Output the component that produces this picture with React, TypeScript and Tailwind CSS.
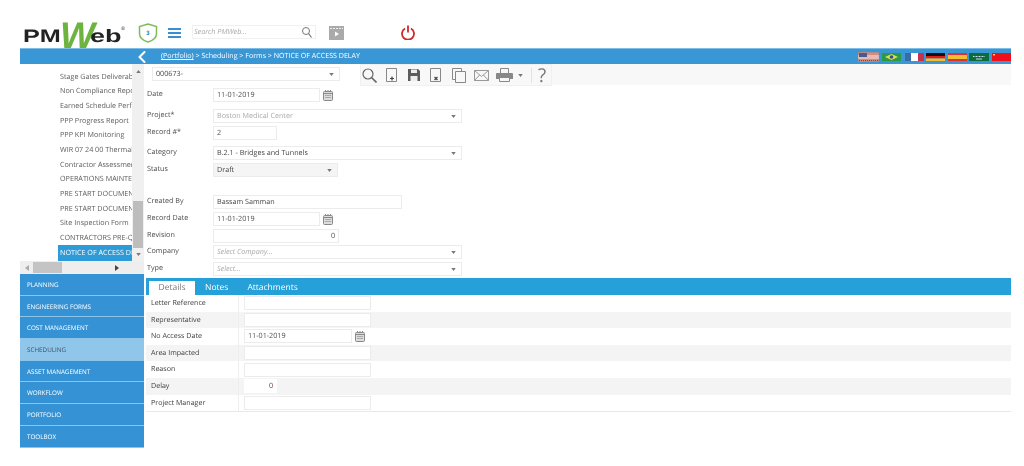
import { ReactNode } from 'react';
import { ChevronLeft } from 'lucide-react';

const treeItems = [
  'Stage Gates Deliverables',
  'Non Compliance Report',
  'Earned Schedule Performance',
  'PPP Progress Report',
  'PPP KPI Monitoring',
  'WIR 07 24 00 Thermal',
  'Contractor Assessment',
  'OPERATIONS MAINTENANCE',
  'PRE START DOCUMENTS',
  'PRE START DOCUMENTS',
  'Site Inspection Form',
  'CONTRACTORS PRE-QUAL',
];

const modules = [
  'PLANNING',
  'ENGINEERING FORMS',
  'COST MANAGEMENT',
  'SCHEDULING',
  'ASSET MANAGEMENT',
  'WORKFLOW',
  'PORTFOLIO',
  'TOOLBOX',
];

function Caret({ className = '' }: { className?: string }) {
  return (
    <svg width="5" height="3" viewBox="0 0 6 4" className={className}>
      <path d="M0 0h6L3 4z" fill="#777" />
    </svg>
  );
}

function CalIcon() {
  return (
    <svg width="10" height="11" viewBox="0 0 10 11" className="ml-[3px] shrink-0">
      <rect x="0.5" y="1.5" width="9" height="9" rx="1" fill="#ddd" stroke="#888" />
      <path d="M0.5 3.5h9" stroke="#888" />
      <path d="M2.5 0v2M5 0v2M7.5 0v2" stroke="#888" />
      <path d="M2 5.5h6M2 7.5h6" stroke="#aaa" />
    </svg>
  );
}

function Box({ w, children, align = 'left', bg = 'bg-white', caret, color = 'text-[#4a4a4a]', h = 'h-[14px]', border = 'border-[#ececec]' }: {
  w: string; children?: ReactNode; align?: 'left' | 'right'; bg?: string; caret?: boolean; color?: string; h?: string; border?: string;
}) {
  return (
    <div className={`${w} ${h} ${bg} ${color} ${border} shrink-0 border flex items-center px-[3px] text-[7.200px] leading-none ${align === 'right' ? 'justify-end' : 'justify-between'}`}>
      <span className="pt-[1px]">{children}</span>
      {caret && <Caret className="mr-[2px]" />}
    </div>
  );
}

function FormRow({ label, children, h }: { label: string; children: ReactNode; h: string }) {
  return (
    <div className={`flex items-start ${h}`}>
      <div className="w-[66px] shrink-0 text-[7.200px] leading-[13.500px] text-[#4a4a4a]">{label}</div>
      <div className="flex items-center">{children}</div>
    </div>
  );
}

function DetailRow({ label, shade, children }: { label: string; shade?: boolean; children: ReactNode }) {
  return (
    <div className={`flex h-[16.600px] items-center ${shade ? 'bg-[#f4f4f4]' : 'bg-white'}`}>
      <div className="w-[93px] h-full shrink-0 border-r border-[#eee] pl-[5px] text-[7.100px] leading-[17px] text-[#3c3c3c]">{label}</div>
      <div className="ml-[5px] flex items-center">{children}</div>
    </div>
  );
}

function ToolbarIcons() {
  return (
    <div className="flex items-center h-[22px] w-[192px] border border-[#f0f0f0] bg-[#f8f8f8]">
      {/* search */}
      <svg width="15" height="15" viewBox="0 0 15 15" className="ml-[1px]" fill="none" stroke="#666">
        <circle cx="6" cy="6" r="5" strokeWidth="1.2" />
        <path d="M9.5 9.5L14.5 14.5" strokeWidth="1.6" />
      </svg>
      {/* new */}
      <svg width="12" height="14" viewBox="0 0 12 14" className="ml-[9px]" fill="none">
        <path d="M0.5 0.5h10v13h-10z" stroke="#888" />
        <path d="M6 8.5v4M4 10.5h4" strokeWidth="1.2" stroke="#444" />
      </svg>
      {/* save */}
      <svg width="12" height="12" viewBox="0 0 12 12" className="ml-[10px]">
        <path d="M0 0h10l2 2v10H0z" fill="#5c5c5c" />
        <rect x="3" y="0.5" width="6" height="3.5" fill="#eee" />
        <rect x="2.5" y="7" width="7" height="5" fill="#eee" />
      </svg>
      {/* delete */}
      <svg width="12" height="14" viewBox="0 0 12 14" className="ml-[10px]" fill="none">
        <path d="M0.5 0.5h10v13h-10z" stroke="#888" />
        <path d="M4.5 9l3 3M7.5 9l-3 3" stroke="#444" strokeWidth="1.2" />
      </svg>
      {/* copy */}
      <svg width="14" height="15" viewBox="0 0 14 15" className="ml-[10px]" fill="#f8f8f8" stroke="#888">
        <path d="M0.5 0.5h9v11h-9z" />
        <path d="M3.5 3.5h10v11h-10z" />
      </svg>
      {/* mail */}
      <svg width="15" height="11" viewBox="0 0 15 11" className="ml-[8px]" fill="none" stroke="#999">
        <path d="M0.5 0.5h14v10h-14z" />
        <path d="M0.5 0.5l7 6 7-6M0.5 10.5l5-5.5M14.5 10.5l-5-5.5" />
      </svg>
      {/* print */}
      <svg width="17" height="14" viewBox="0 0 17 14" className="ml-[7px]">
        <path d="M4.5 0.5h8v5h-8z" fill="none" stroke="#888" />
        <path d="M1 5h15a1 1 0 0 1 1 1v5H0V6a1 1 0 0 1 1-1z" fill="#888" />
        <path d="M3.5 9.5h10v4h-10z" fill="#f8f8f8" stroke="#888" />
      </svg>
      <Caret className="ml-[5px]" />
      <div className="ml-[8px] h-[15px] w-px bg-[#e2e2e2]" />
      <span className="ml-[6px] text-[19px] leading-none text-[#777]">?</span>
    </div>
  );
}

function Flags() {
  return (
    <div className="flex items-center gap-[2px] h-full">
      <svg width="21" height="10" viewBox="0 0 21 10">
        <rect width="21" height="10" fill="#d98a7c" stroke="#8a8a9a" />
        <path d="M0 4h21M0 6h21" stroke="#eee" />
        <path d="M1 8.5h19" stroke="#a33" strokeDasharray="1 1" />
        <rect x="1" y="1" width="8" height="4" fill="#4a5a8c" />
      </svg>
      <svg width="19" height="8" viewBox="0 0 19 8" className="ml-[1px]">
        <rect width="19" height="8" fill="#2a9a48" />
        <path d="M9.5 1L16 4 9.5 7 3 4z" fill="#e8d84a" />
        <circle cx="9.5" cy="4" r="1.8" fill="#2f4f9a" />
      </svg>
      <svg width="19" height="8" viewBox="0 0 19 8" className="ml-[2px]">
        <rect width="6" height="8" fill="#3c6aa4" />
        <rect x="6" width="7" height="8" fill="#fff" />
        <rect x="13" width="6" height="8" fill="#c8304e" />
      </svg>
      <svg width="19" height="8" viewBox="0 0 19 8">
        <rect width="19" height="3" fill="#111" />
        <rect y="3" width="19" height="2.5" fill="#d81e1e" />
        <rect y="5.5" width="19" height="2.5" fill="#f0c030" />
      </svg>
      <svg width="19" height="8" viewBox="0 0 19 8" className="ml-[1px]">
        <rect width="19" height="8" fill="#e03030" />
        <rect y="2" width="19" height="4" fill="#f0c030" />
      </svg>
      <svg width="20" height="8" viewBox="0 0 20 8">
        <rect width="20" height="8" fill="#0c6c3a" />
        <path d="M4 3.5h12" stroke="#cde" strokeDasharray="1 0.5" />
        <path d="M7 6h6" stroke="#cde" />
      </svg>
      <svg width="19" height="8" viewBox="0 0 19 8" className="ml-[1px]">
        <rect width="19" height="8" fill="#f0101c" />
        <rect x="1" y="1" width="2" height="1.5" fill="#f4d030" />
      </svg>
    </div>
  );
}

export default function App() {
  return (
    <div className="w-[1024px] h-[466px] bg-white overflow-hidden blur-[0.35px] [text-rendering:geometricPrecision]" style={{ fontFamily: '"Open Sans", sans-serif' }}>
      {/* Header */}
      <div className="h-[48px] pl-[22px] pt-[20px] flex items-start">
        <div className="w-[103px] h-[27px] shrink-0 relative" style={{ fontFamily: '"Liberation Sans", sans-serif' }}>
          <span className="absolute left-[1px] top-[7px] text-[#222] font-bold text-[18px] leading-none scale-x-[1.4] origin-left">PM</span>
          <span className="absolute left-[38px] top-[-3px] text-[#6cb33f] italic font-bold text-[37px] leading-none">W</span>
          <span className="absolute left-[68px] top-[7px] text-[#222] font-bold text-[18px] leading-none scale-x-[1.5] origin-left">eb</span>
          <span className="absolute right-0 top-[7px] text-[#222] text-[5px] leading-none">®</span>
        </div>
        <div className="relative ml-[13px] mt-[3px] w-[20px] h-[20px] shrink-0">
          <svg width="20" height="20" viewBox="0 0 20 20" fill="none">
            <path d="M10 1l8.500 2.500v7c0 4-3.500 7-8.500 8.500-5-1.500-8.500-4.500-8.500-8.500v-7z" stroke="#7dbb5c" strokeWidth="1.500" />
          </svg>
          <span className="absolute inset-0 flex items-center justify-center text-[6px] font-bold text-[#2b7fc0]">3</span>
        </div>
        <div className="ml-[10px] mt-[8px] w-[13px] shrink-0 flex flex-col gap-[2px]">
          <div className="h-[2px] bg-[#3a8fd0]" />
          <div className="h-[2px] bg-[#3a8fd0]" />
          <div className="h-[2px] bg-[#3a8fd0]" />
        </div>
        <div className="ml-[11px] mt-[5px] w-[124px] h-[14px] shrink-0 border border-[#f0f0f0] flex items-center justify-between pl-[1px] pr-[3px]">
          <span className="pt-[1px] text-[7.200px] italic text-[#aaa] leading-none">Search PMWeb...</span>
          <svg width="10" height="11" viewBox="0 0 10 11" fill="none" stroke="#777">
            <circle cx="4" cy="4" r="3.500" />
            <path d="M6.500 6.500L9.500 10.500" strokeWidth="1.200" />
          </svg>
        </div>
        <svg width="15" height="14" viewBox="0 0 15 14" className="ml-[13px] mt-[6px] shrink-0">
          <rect width="15" height="14" fill="#aaa" />
          <path d="M1 2.500h13" stroke="#eee" strokeDasharray="2 1" />
          <path d="M6 5.500l4 2.500-4 2.500z" fill="#fff" />
        </svg>
        <svg width="14" height="15" viewBox="0 0 14 15" className="ml-[57px] mt-[5px] shrink-0" fill="none" stroke="#d02a2a" strokeWidth="1.800">
          <path d="M4 3.500A6 6 0 1 0 10 3.500" />
          <path d="M7 0.500v7" />
        </svg>
      </div>

      {/* Blue path bar */}
      <div className="ml-[20px] w-[991px] h-[16px] bg-[#3a97d6] border-t border-[#7dbde8] flex items-center text-white relative">
        <ChevronLeft className="absolute left-[112px] top-[-2px] w-[20px] h-[20px]" strokeWidth={2.500} />
        <div className="ml-[141px] text-[7.100px] leading-none flex-1">
          <span className="underline">(Portfolio)</span> &gt; Scheduling &gt; Forms &gt; NOTICE OF ACCESS DELAY
        </div>
        <Flags />
      </div>

      <div className="ml-[20px] w-[991px] flex">
        {/* Sidebar */}
        <div className="w-[124px] shrink-0">
          <div className="h-[197px] flex">
            <div className="w-[112px] overflow-hidden pl-[38px]">
              <div className="h-[4.500px]" />
              {treeItems.map((item, i) => (
                <div key={i} className="h-[14.700px] pl-[2px] text-[7.200px] leading-[16px] text-[#5c5c5c] whitespace-nowrap">{item}</div>
              ))}
              <div className="h-[16px] w-[74px] bg-[#2f9ad8] pl-[2px] text-[7.200px] leading-[17px] text-white whitespace-nowrap overflow-hidden">NOTICE OF ACCESS DELAY</div>
            </div>
            <div className="w-[12px] bg-[#f0f0f0] flex flex-col items-center pt-[6px]">
              <Caret className="rotate-180" />
              <div className="mt-auto w-[10px] h-[47px] bg-[#bdbdbd]" />
              <Caret className="my-[5px]" />
            </div>
          </div>
          <div className="h-[13px] bg-[#eee] flex items-center">
            <span className="ml-[5px] w-0 h-0 border-y-[3px] border-y-transparent border-r-[4px] border-r-[#aaa]" />
            <div className="ml-[4px] w-[29px] h-[11px] bg-[#c4c4c4]" />
            <span className="ml-[53px] w-0 h-0 border-y-[3px] border-y-transparent border-l-[4px] border-l-[#444]" />
          </div>
          <div className="flex flex-col">
            {modules.map((m) => (
              <div
                key={m}
                className={`h-[21.700px] border-b border-[#8dc4ea] pl-[7px] text-[6.300px] leading-[21px] ${m === 'SCHEDULING' ? 'bg-[#8fc6ea] text-[#3c566e]' : 'bg-[#3593d5] text-white'}`}
              >
                {m}
              </div>
            ))}
          </div>
        </div>

        {/* Main panel */}
        <div className="flex-1 min-w-0 pl-[2px]">
          <div className="flex items-start h-[24px]">
            <div className="pl-[6px] pt-[3px]">
              <Box w="w-[188px]" caret color="text-[#444]">000673-</Box>
            </div>
            <div className="ml-[20px]">
              <ToolbarIcons />
            </div>
            <div className="flex-1 h-[21px] bg-[#f8f8f8]" />
          </div>
          <div className="pl-[1px]">
            <FormRow label="Date" h="h-[21px]">
              <Box w="w-[107px]">11-01-2019</Box>
              <CalIcon />
            </FormRow>
            <FormRow label="Project*" h="h-[17px]">
              <Box w="w-[249px]" caret color="text-[#aaa]">Boston Medical Center</Box>
            </FormRow>
            <FormRow label="Record #*" h="h-[20px]">
              <Box w="w-[64px]">2</Box>
            </FormRow>
            <FormRow label="Category" h="h-[17px]">
              <Box w="w-[249px]" caret color="text-[#444]">B.2.1 - Bridges and Tunnels</Box>
            </FormRow>
            <FormRow label="Status" h="h-[32px]">
              <Box w="w-[125px]" caret bg="bg-[#f5f5f5]" color="text-[#444]">Draft</Box>
            </FormRow>
            <FormRow label="Created By" h="h-[17px]">
              <Box w="w-[189px]" color="text-[#444]">Bassam Samman</Box>
            </FormRow>
            <FormRow label="Record Date" h="h-[17px]">
              <Box w="w-[107px]">11-01-2019</Box>
              <CalIcon />
            </FormRow>
            <FormRow label="Revision" h="h-[16px]">
              <Box w="w-[126px]" align="right">0</Box>
            </FormRow>
            <FormRow label="Company" h="h-[17px]">
              <Box w="w-[249px]" caret color="text-[#aaa] italic">Select Company...</Box>
            </FormRow>
            <FormRow label="Type" h="h-[17px]">
              <Box w="w-[249px]" caret color="text-[#aaa] italic">Select...</Box>
            </FormRow>
          </div>

          {/* Tabs */}
          <div className="h-[17px] mt-[-1px] bg-[#25a0d8] flex items-end pl-[3px] text-[8.500px] leading-none">
            <div className="w-[46px] h-[14px] pt-[1px] bg-white text-[#777] flex items-center justify-center">Details</div>
            <div className="ml-[10px] h-[14px] pt-[1px] text-white flex items-center">Notes</div>
            <div className="ml-[19px] h-[14px] pt-[1px] text-white flex items-center">Attachments</div>
          </div>
          <div className="border-b border-[#e8e8e8]">
            <DetailRow label="Letter Reference"><Box w="w-[127px]" /></DetailRow>
            <DetailRow label="Representative" shade><Box w="w-[127px]" /></DetailRow>
            <DetailRow label="No Access Date"><Box w="w-[108px]">11-01-2019</Box><CalIcon /></DetailRow>
            <DetailRow label="Area Impacted" shade><Box w="w-[127px]" /></DetailRow>
            <DetailRow label="Reason"><Box w="w-[127px]" /></DetailRow>
            <DetailRow label="Delay" shade><Box w="w-[33px]" align="right" color="text-[#733]" border="border-white">0</Box></DetailRow>
            <DetailRow label="Project Manager"><Box w="w-[127px]" /></DetailRow>
          </div>
        </div>
      </div>
    </div>
  );
}
